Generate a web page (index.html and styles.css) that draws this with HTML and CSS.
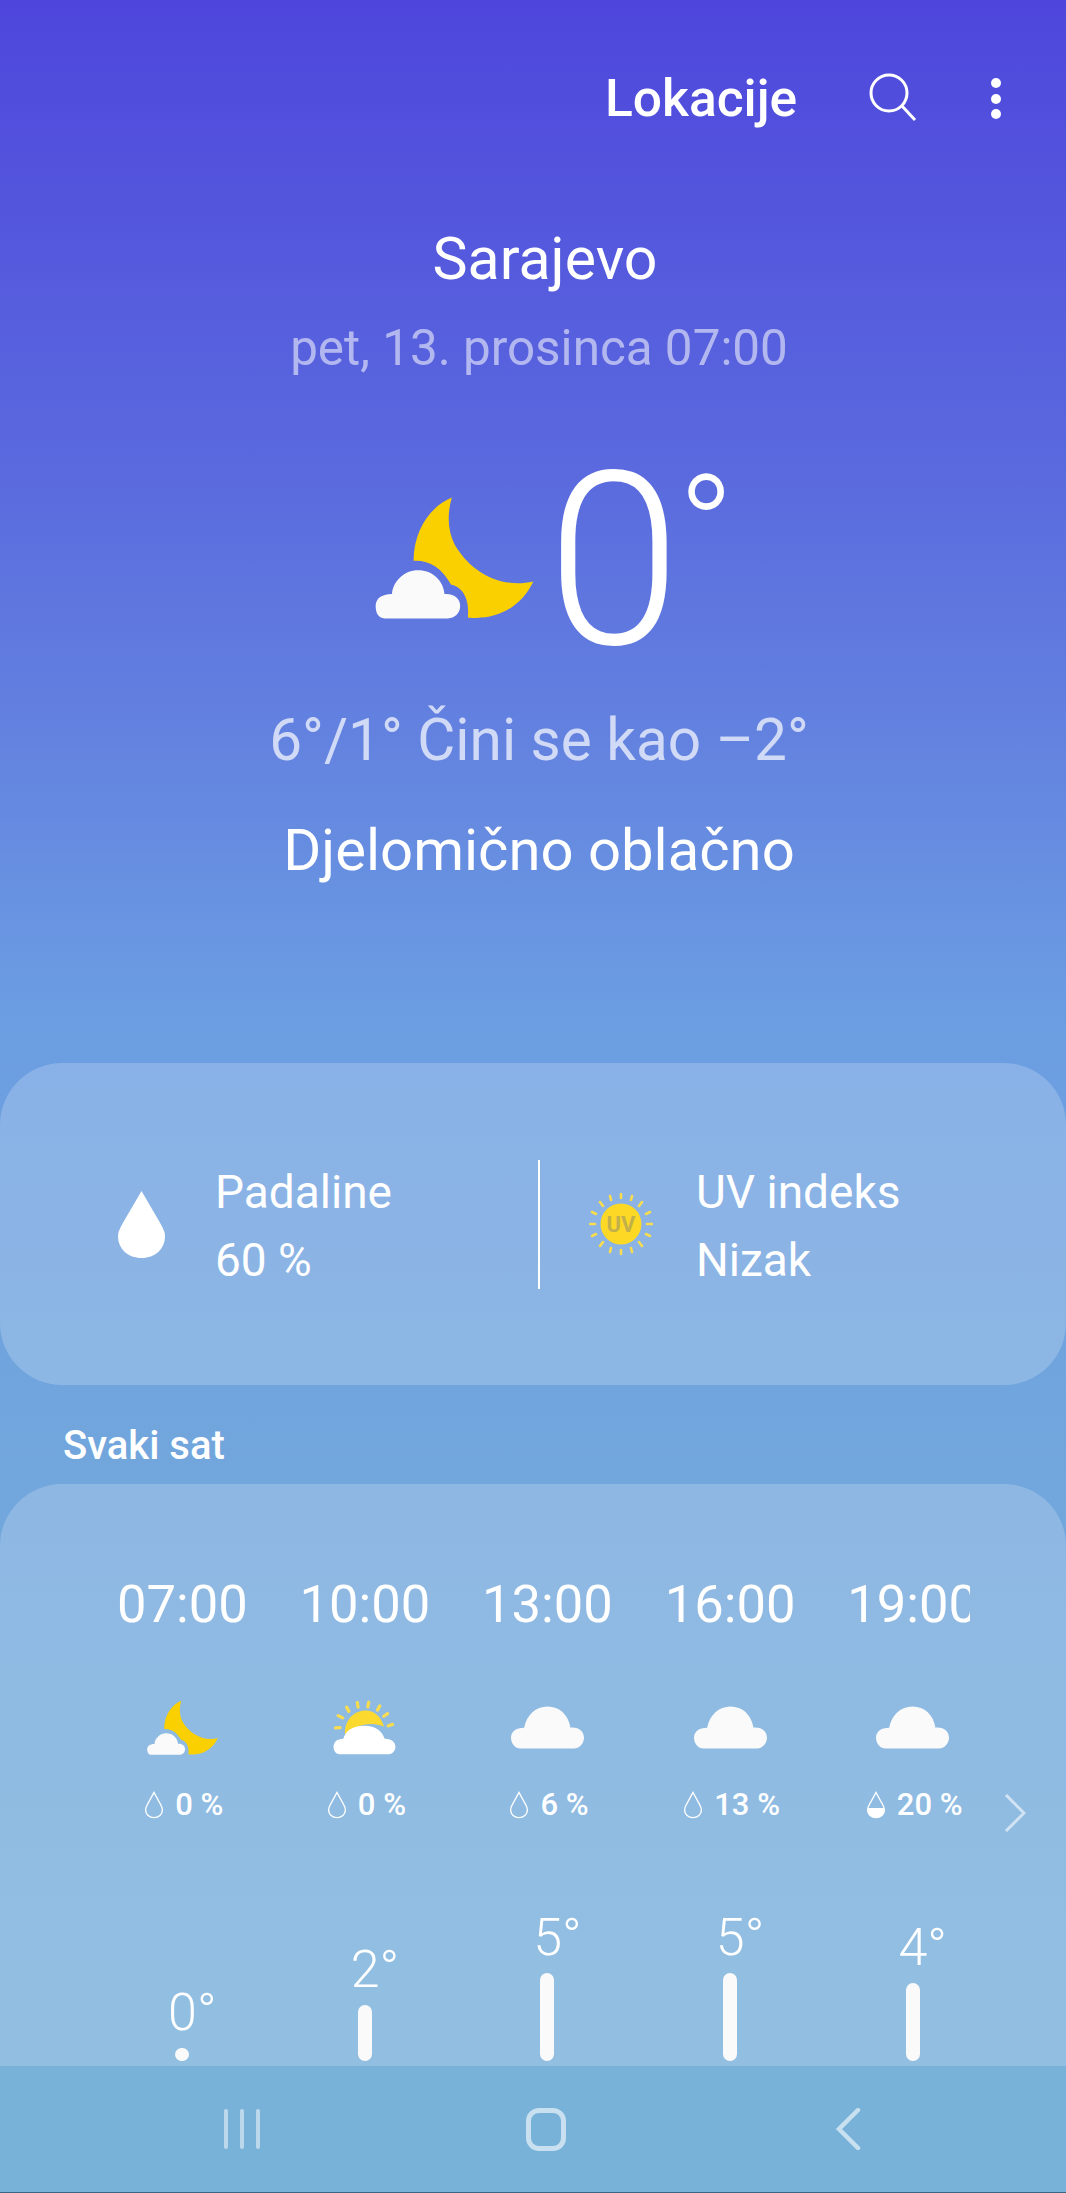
FILE: index.html
```html
<!DOCTYPE html>
<html lang="hr">
<head>
  <meta charset="UTF-8">
  <meta name="viewport" content="width=device-width, initial-scale=1.0">
  <title>Vrijeme</title>
  <link rel="stylesheet" href="styles.css">
</head>
<body>
  <!-- Shared weather icons -->
  <svg class="icon-defs" aria-hidden="true">
    <symbol id="moon-cloud" viewBox="100 220 490 380">
      <path fill="#fbd000" d="M337 230C270 258 222 330 222 420C270 418 305 440 335 492C362 497 392 525 385 590C470 600 545 560 582 482C480 505 390 450 345 370C325 330 322 280 337 230Z"/>
      <path fill="#fafafa" d="M135 593C115 593 108 575 108 556C108 535 125 520 157 520C160 480 195 448 235 448C280 448 312 480 315 520C345 518 362 535 362 556C362 578 345 593 325 593Z"/>
    </symbol>
    <symbol id="sun-cloud" viewBox="635 55 200 175">
      <path fill="#fbd92e" d="M675 162C674 118 703 90 738 90C768 90 787 112 795 140C772 128 742 130 718 138C703 144 695 152 690 162Z"/>
      <g stroke="#f9dc50" stroke-width="10" stroke-linecap="round">
        <path d="M646 144L660 143M654 106L668 113M680 80L687 93M713 66L715 80M748 65L745 79M782 76L775 89M806 100L794 108M821 133L808 137"/>
      </g>
      <path fill="#fff" d="M662 225C648 225 640 214 640 202C640 188 650 177 670 177C676 155 695 137 735 137C770 137 790 155 797 177C818 176 830 188 830 202C830 214 820 225 806 225Z"/>
    </symbol>
    <symbol id="cloud" viewBox="1176 80 216 125">
      <path fill="#fafafa" d="M1205 205C1188 205 1176 190 1176 173C1176 155 1190 143 1215 143C1222 105 1250 80 1284 80C1320 80 1346 105 1352 143C1378 141 1392 155 1392 173C1392 190 1378 205 1362 205Z"/>
    </symbol>
    <symbol id="drop-empty" viewBox="0 0 20 28">
      <path fill="none" stroke="#fff" stroke-width="1.4" d="M10 1.5L16.6 13.5C18 16 18.4 17.5 18.4 19C18.4 23.4 14.6 26.6 10 26.6C5.4 26.6 1.6 23.4 1.6 19C1.6 17.5 2 16 3.4 13.5Z"/>
    </symbol>
    <symbol id="drop-half" viewBox="0 0 20 28">
      <path fill="none" stroke="#fff" stroke-width="1.4" d="M10 1.5L16.6 13.5C18 16 18.4 17.5 18.4 19C18.4 23.4 14.6 26.6 10 26.6C5.4 26.6 1.6 23.4 1.6 19C1.6 17.5 2 16 3.4 13.5Z"/>
      <path fill="#fff" d="M1.6 17H18.4V19C18.4 23.4 14.6 26.6 10 26.6C5.4 26.6 1.6 23.4 1.6 19Z"/>
    </symbol>
  </svg>

  <div class="screen">
    <div class="content">
      <!-- Top bar -->
      <header class="top-bar">
        <span class="top-title">Lokacije</span>
        <svg class="search-icon" viewBox="0 0 50 50">
          <circle cx="21" cy="20" r="18" fill="none" stroke="#fff" stroke-width="3"/>
          <path d="M34 33L47 47" fill="none" stroke="#fff" stroke-width="3"/>
        </svg>
        <div class="more-icon"><i></i><i></i><i></i></div>
      </header>

      <!-- Current weather -->
      <section class="current">
        <h1 class="city">Sarajevo</h1>
        <p class="date">pet, 13. prosinca 07:00</p>
        <div class="temp-row">
          <svg class="temp-icon"><use href="#moon-cloud"/></svg>
          <span class="temp">0</span>
          <span class="temp-deg">°</span>
        </div>
        <p class="feels">6°/1° Čini se kao –2°</p>
        <p class="condition">Djelomično oblačno</p>
      </section>

      <!-- Rain and UV card -->
      <section class="card stats">
        <div class="stat stat-rain">
          <svg class="stat-drop" viewBox="0 0 47 67">
            <path fill="#fff" d="M23.5 0L41 30C45 37 47 41 47 45C47 58 37 67 23.5 67C10 67 0 58 0 45C0 41 2 37 6 30Z"/>
          </svg>
          <div class="stat-text">
            <span>Padaline</span>
            <span>60 %</span>
          </div>
        </div>
        <div class="stat-divider"></div>
        <div class="stat stat-uv">
          <div class="uv-icon">
            <svg viewBox="0 0 64 62">
              <g stroke="#f9dc50" stroke-width="2.6" stroke-linecap="round">
                <path d="M32 1V5M32 57V61M1 31H6M58 31H63M11 9L14 13M50 49L53 53M53 9L50 13M14 49L11 53M21 3L22 7M43 3L42 7M21 59L22 55M43 59L42 55M3 19L7 21M57 41L61 43M61 19L57 21M7 41L3 43"/>
              </g>
              <circle cx="32" cy="31" r="20.5" fill="#fdd926"/>
            </svg>
            <span class="uv-label">UV</span>
          </div>
          <div class="stat-text">
            <span>UV indeks</span>
            <span>Nizak</span>
          </div>
        </div>
      </section>

      <h2 class="section-title">Svaki sat</h2>

      <!-- Hourly forecast card -->
      <section class="card hourly">
        <div class="hours">
          <div class="hour">
            <span class="hour-time">07:00</span>
            <svg class="hour-icon"><use href="#moon-cloud"/></svg>
            <div class="hour-rain"><svg class="mini-drop"><use href="#drop-empty"/></svg>0 %</div>
            <div class="hour-chart">
              <span class="hour-temp">0°</span>
              <div class="hour-bar" style="height: 13px"></div>
            </div>
          </div>
          <div class="hour">
            <span class="hour-time">10:00</span>
            <svg class="hour-icon"><use href="#sun-cloud"/></svg>
            <div class="hour-rain"><svg class="mini-drop"><use href="#drop-empty"/></svg>0 %</div>
            <div class="hour-chart">
              <span class="hour-temp">2°</span>
              <div class="hour-bar" style="height: 56px"></div>
            </div>
          </div>
          <div class="hour">
            <span class="hour-time">13:00</span>
            <svg class="hour-icon"><use href="#cloud"/></svg>
            <div class="hour-rain"><svg class="mini-drop"><use href="#drop-empty"/></svg>6 %</div>
            <div class="hour-chart">
              <span class="hour-temp">5°</span>
              <div class="hour-bar" style="height: 88px"></div>
            </div>
          </div>
          <div class="hour">
            <span class="hour-time">16:00</span>
            <svg class="hour-icon"><use href="#cloud"/></svg>
            <div class="hour-rain"><svg class="mini-drop"><use href="#drop-empty"/></svg>13 %</div>
            <div class="hour-chart">
              <span class="hour-temp">5°</span>
              <div class="hour-bar" style="height: 88px"></div>
            </div>
          </div>
          <div class="hour">
            <span class="hour-time">19:00</span>
            <svg class="hour-icon"><use href="#cloud"/></svg>
            <div class="hour-rain"><svg class="mini-drop"><use href="#drop-half"/></svg>20 %</div>
            <div class="hour-chart">
              <span class="hour-temp">4°</span>
              <div class="hour-bar" style="height: 78px"></div>
            </div>
          </div>
        </div>
        <svg class="next-arrow" viewBox="0 0 22 38">
          <path d="M2 1L20 19L2 37" fill="none" stroke="#fff" stroke-opacity="0.6" stroke-width="3"/>
        </svg>
      </section>
    </div>

    <!-- Android navigation bar -->
    <nav class="nav-bar">
      <div class="nav-recents"><i></i><i></i><i></i></div>
      <div class="nav-home"></div>
      <svg class="nav-back" viewBox="0 0 26 42">
        <path d="M23 2L4 21L23 40" fill="none" stroke="#fff" stroke-opacity="0.6" stroke-width="4.5" stroke-linecap="round"/>
      </svg>
    </nav>
  </div>
</body>
</html>
```

FILE: styles.css
```css
/* Body and global layout */
body {
  margin: 0;
  font-family: 'Roboto', sans-serif;
  color: white;
  overflow: hidden;
}

.icon-defs {
  display: none;
}

.screen {
  height: 2193px;
  display: flex;
  flex-direction: column;
  background: linear-gradient(180deg, #4e46dc 0%, #5a69de 21%, #6485e0 35%, #6b9de2 46%, #71a5dd 64%, #78b2d9 100%);
}

.content {
  flex: 1;
  min-height: 0;
  overflow: hidden;
}

/* Top bar */
.top-bar {
  height: 196px;
  box-sizing: border-box;
  padding: 66px 47px 0 605px;
  display: flex;
  align-items: flex-start;
}

.top-title {
  font-size: 51.5px;
  font-weight: 500;
  line-height: 66px;
}

.search-icon {
  width: 50px;
  height: 50px;
  margin: 7px 0 0 71px;
}

.more-icon {
  margin: 12px 0 0 73px;
  display: flex;
  flex-direction: column;
  gap: 5.5px;
}

.more-icon i {
  width: 10px;
  height: 10px;
  border-radius: 50%;
  background: white;
}

/* Current weather */
.current {
  height: 867px;
  box-sizing: border-box;
  padding-left: 12px;
  text-align: center;
}

.city {
  margin: 0;
  padding-left: 12px;
  font-size: 59px;
  font-weight: 400;
  line-height: 126px;
}

.date {
  margin: 1px 0 0;
  font-size: 49.4px;
  font-weight: 400;
  line-height: 50px;
  color: rgba(255, 255, 255, 0.55);
}

.temp-row {
  height: 262px;
  margin-top: 58px;
  padding-left: 361px;
  display: flex;
  align-items: flex-start;
}

.temp-icon {
  width: 163px;
  height: 127px;
  margin-top: 63px;
}

.temp {
  margin-left: 11px;
  font-size: 241px;
  font-weight: 300;
  line-height: 262px;
}

.temp-deg {
  margin: 15px 0 0 -3px;
  font-size: 150px;
  font-weight: 300;
  line-height: 170px;
}

.feels {
  margin: 12px 0 0;
  font-size: 58.5px;
  font-weight: 400;
  line-height: 70px;
  color: rgba(255, 255, 255, 0.7);
}

.condition {
  margin: 40px 0 0;
  font-size: 58px;
  font-weight: 400;
  line-height: 70px;
}

/* Cards */
.card {
  background: rgba(255, 255, 255, 0.2);
  border-radius: 62px;
}

.stats {
  height: 322px;
  display: flex;
  align-items: center;
}

.stat {
  flex: 1;
  display: flex;
  align-items: center;
}

.stat-rain {
  flex: 0 0 538px;
  padding-left: 118px;
  box-sizing: border-box;
}

.stat-drop {
  width: 47px;
  height: 67px;
  margin-right: 50px;
}

.stat-text {
  padding-top: 4px;
  display: flex;
  flex-direction: column;
  font-size: 46px;
  font-weight: 400;
  line-height: 68px;
}

.stat-divider {
  width: 2px;
  height: 129px;
  background: white;
}

.stat-uv {
  padding-left: 49px;
}

.uv-icon {
  width: 64px;
  height: 62px;
  margin-right: 43px;
  display: flex;
  align-items: center;
  justify-content: center;
  position: relative;
}

.uv-icon svg {
  position: absolute;
  inset: 0;
}

/* Label sits on top of the sun */
.uv-label {
  position: relative;
  font-size: 22px;
  font-weight: 700;
  color: #c2b04a;
}

.section-title {
  margin: 0;
  padding-left: 63px;
  height: 99px;
  font-size: 40px;
  font-weight: 500;
  line-height: 122px;
}

/* Hourly forecast */
.hourly {
  height: 660px;
  border-radius: 62px 62px 0 0;
  display: flex;
  align-items: flex-start;
  padding-left: 91px;
  box-sizing: border-box;
}

.hours {
  width: 879px;
  flex: none;
  overflow: hidden;
  display: flex;
}

.hour {
  flex: 0 0 182.6px;
  display: flex;
  flex-direction: column;
  align-items: center;
}

.hour-time {
  margin-top: 90px;
  font-size: 52.5px;
  font-weight: 400;
  line-height: 60px;
}

.hour-icon {
  width: 73px;
  height: 57px;
  margin-top: 65px;
}

.hour-rain {
  margin-top: 31px;
  padding-left: 3px;
  display: flex;
  align-items: center;
  gap: 11px;
  font-size: 31px;
  font-weight: 500;
  line-height: 36px;
}

.mini-drop {
  width: 20px;
  height: 28px;
}

.hour-chart {
  height: 238px;
  display: flex;
  flex-direction: column;
  justify-content: flex-end;
  align-items: center;
  align-self: stretch;
}

.hour-temp {
  padding-left: 20px;
  font-size: 52px;
  font-weight: 300;
  line-height: 60px;
}

.hour-bar {
  width: 14px;
  margin-top: 5px;
  border-radius: 7px;
  background: #fafafa;
}

.next-arrow {
  width: 22px;
  height: 38px;
  margin: 310px 0 0 34px;
  flex: none;
}

/* Navigation bar */
.nav-bar {
  height: 127px;
  flex: none;
  box-sizing: border-box;
  background: #78b2d9;
  border-bottom: 1px solid #3c6580;
  display: flex;
  align-items: center;
  padding: 0 205px 0 224px;
  justify-content: space-between;
}

.nav-recents {
  display: flex;
  gap: 12px;
}

.nav-recents i {
  width: 4px;
  height: 40px;
  border-radius: 2px;
  background: rgba(255, 255, 255, 0.5);
}

.nav-home {
  width: 30px;
  height: 33px;
  margin-right: 4px;
  border: 5px solid rgba(255, 255, 255, 0.6);
  border-radius: 13px;
}

.nav-back {
  width: 26px;
  height: 42px;
}
```
